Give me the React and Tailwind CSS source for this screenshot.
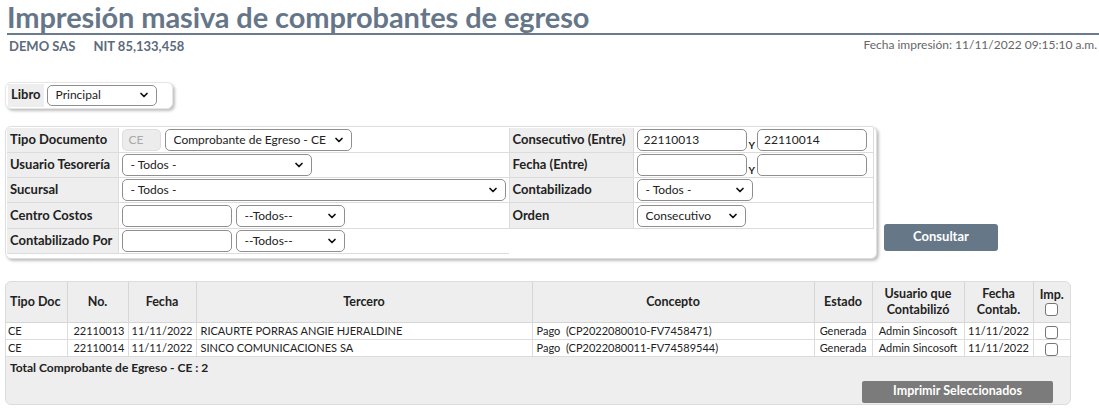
import { ChevronDown } from 'lucide-react';

// ── small form atoms ─────────────────────────────────────────────────────────
function Select({ value, className = '' }) {
  return (
    <div
      className={[
        'flex items-center justify-between h-[21px] pl-[8px] pr-[6px]',
        'border border-[#8f8f8f] rounded-[5px] bg-white text-[12px] text-[#222]',
        className,
      ].join(' ')}
    >
      <span className="truncate">{value}</span>
      <ChevronDown size={12} strokeWidth={3.5} className="shrink-0 text-[#111]" />
    </div>
  );
}

function Input({ value = '', className = '', disabled = false }) {
  return (
    <div
      className={[
        'flex items-center h-[22px] px-[6px] rounded-[5px] border text-[12px]',
        disabled
          ? 'bg-[#ececec] border-[#dedede] text-[#a9a9a9]'
          : 'bg-white border-[#8f8f8f] text-[#222]',
        className,
      ].join(' ')}
    >
      {value}
    </div>
  );
}

const Y = () => <span className="text-[10px] font-bold text-[#222] self-end mx-[2px] -mb-[2px]">Y</span>;

function Label({ children }) {
  return (
    <td className="bg-[#eeeeee] pl-[3px] pr-[4px] font-bold text-[13px] text-[#222] whitespace-nowrap border-b border-r border-[#dcdcdc]">
      {children}
    </td>
  );
}

function Field({ children }) {
  return (
    <td className="px-[3px] border-b border-r border-[#dcdcdc]">
      <div className="flex items-center gap-[4px]">{children}</div>
    </td>
  );
}

// ── result rows ──────────────────────────────────────────────────────────────
const ROWS = [
  ['CE', '22110013', '11/11/2022', 'RICAURTE PORRAS ANGIE HJERALDINE', 'Pago  (CP2022080010-FV7458471)'],
  ['CE', '22110014', '11/11/2022', 'SINCO COMUNICACIONES SA', 'Pago  (CP2022080011-FV74589544)'],
];

const Check = () => (
  <span className="inline-block w-[13px] h-[13px] border border-[#767676] rounded-[3px] bg-white align-middle" />
);

export default function App() {
  return (
    <div className="w-[1099px] h-[409px] bg-white font-['Lato','Liberation_Sans',sans-serif] text-[#222] overflow-hidden">
      {/* ── Header ─────────────────────────────────────────────────────── */}
      <div className="pl-[7px]">
        <h1 className="text-[29px] leading-[33px] font-bold text-[#667689] tracking-[-0.1px]">
          Impresión masiva de comprobantes de egreso
        </h1>
        <div className="h-[2px] bg-[#6b7b8c]" />
        <div className="flex justify-between items-start pr-[2px]">
          <p className="pl-[2px] pt-[2px] text-[13px] font-bold text-[#5c6b7b]">
            DEMO SAS<span className="inline-block w-[18px]" />NIT 85,133,458
          </p>
          <p className="pt-[1px] text-[12px] text-[#666]">Fecha impresión: 11/11/2022 09:15:10 a.m.</p>
        </div>
      </div>

      {/* ── Libro ──────────────────────────────────────────────────────── */}
      <div className="ml-[5px] mt-[25px] w-[168px] h-[27px] flex items-center gap-[3px] pl-[2px] rounded-[6px] bg-white border border-[#e6e6e6] shadow-[2px_2px_3px_rgba(0,0,0,0.25)]">
        <span className="bg-[#eeeeee] h-[23px] flex items-center px-[3px] font-bold text-[13px]">Libro</span>
        <Select value="Principal" className="w-[110px]" />
      </div>

      {/* ── Filters + Consultar ────────────────────────────────────────── */}
      <div className="flex items-end gap-[7px] mt-[17px] ml-[5px]">
        <div className="w-[872px] h-[133px] bg-white border border-[#dedede] rounded-[6px] shadow-[2px_2px_3px_rgba(0,0,0,0.25)] pl-[1px] pt-[1px]">
          <table className="border-collapse w-[866px] table-fixed">
            <colgroup>
              <col className="w-[111px]" />
              <col className="w-[391px]" />
              <col className="w-[124px]" />
              <col className="w-[240px]" />
            </colgroup>
            <tbody>
              <tr className="h-[25px]">
                <Label>Tipo Documento</Label>
                <Field>
                  <Input value="CE" disabled className="w-[39px]" />
                  <Select value="Comprobante de Egreso - CE" className="w-[187px] h-[22px]" />
                </Field>
                <Label>Consecutivo (Entre)</Label>
                <Field>
                  <div className="flex">
                    <Input value="22110013" className="w-[110px]" />
                    <Y />
                    <Input value="22110014" className="w-[110px]" />
                  </div>
                </Field>
              </tr>
              <tr className="h-[25px]">
                <Label>Usuario Tesorería</Label>
                <Field>
                  <Select value="- Todos -" className="w-[190px] h-[22px]" />
                </Field>
                <Label>Fecha (Entre)</Label>
                <Field>
                  <div className="flex">
                    <Input className="w-[110px]" />
                    <Y />
                    <Input className="w-[110px]" />
                  </div>
                </Field>
              </tr>
              <tr className="h-[25px]">
                <Label>Sucursal</Label>
                <Field>
                  <Select value="- Todos -" className="w-[384px] h-[22px]" />
                </Field>
                <Label>Contabilizado</Label>
                <Field>
                  <Select value="- Todos -" className="w-[116px] h-[22px]" />
                </Field>
              </tr>
              <tr className="h-[26px]">
                <Label>Centro Costos</Label>
                <Field>
                  <Input className="w-[110px]" />
                  <Select value="--Todos--" className="w-[109px] h-[22px]" />
                </Field>
                <Label>Orden</Label>
                <Field>
                  <Select value="Consecutivo" className="w-[109px] h-[22px]" />
                </Field>
              </tr>
              <tr className="h-[25px]">
                <Label>Contabilizado Por</Label>
                <td className="px-[3px] border-b border-[#dcdcdc]">
                  <div className="flex items-center gap-[4px]">
                    <Input className="w-[110px]" />
                    <Select value="--Todos--" className="w-[109px] h-[22px]" />
                  </div>
                </td>
                <td colSpan={2} />
              </tr>
            </tbody>
          </table>
        </div>
        <button className="mb-[8px] w-[114px] h-[27px] rounded-[3px] bg-[#667788] text-white font-bold text-[13px]">
          Consultar
        </button>
      </div>

      {/* ── Results ────────────────────────────────────────────────────── */}
      <div className="ml-[5px] mt-[22px] w-[1066px] h-[124px] flex flex-col bg-[#eeeeee] border border-[#dcdcdc] rounded-[6px] overflow-hidden">
        <table className="border-collapse table-fixed w-[1064px] text-[11px]">
          <colgroup>
            <col className="w-[61px]" />
            <col className="w-[61px]" />
            <col className="w-[68px]" />
            <col className="w-[336px]" />
            <col className="w-[282px]" />
            <col className="w-[58px]" />
            <col className="w-[92px]" />
            <col className="w-[69px]" />
            <col className="w-[37px]" />
          </colgroup>
          <thead>
            <tr className="h-[41px] text-[12.5px] font-bold leading-[16px]">
              <th className="text-left pl-[4px] border-r border-b border-[#d6d6d6]">Tipo Doc</th>
              <th className="border-r border-b border-[#d6d6d6]">No.</th>
              <th className="border-r border-b border-[#d6d6d6]">Fecha</th>
              <th className="border-r border-b border-[#d6d6d6]">Tercero</th>
              <th className="border-r border-b border-[#d6d6d6]">Concepto</th>
              <th className="border-r border-b border-[#d6d6d6]">Estado</th>
              <th className="border-r border-b border-[#d6d6d6]">Usuario que<br />Contabilizó</th>
              <th className="border-r border-b border-[#d6d6d6]">Fecha<br />Contab.</th>
              <th className="border-b border-[#d6d6d6]">
                Imp.
                <div className="leading-[12px]"><Check /></div>
              </th>
            </tr>
          </thead>
          <tbody>
            {ROWS.map(([tipo, no, fecha, tercero, concepto]) => (
              <tr key={no} className="h-[17px] bg-white leading-[16px]">
                <td className="pl-[2px] border-r border-b border-[#dcdcdc]">{tipo}</td>
                <td className="text-right pr-[3px] border-r border-b border-[#dcdcdc]">{no}</td>
                <td className="text-right pr-[3px] border-r border-b border-[#dcdcdc]">{fecha}</td>
                <td className="pl-[4px] border-r border-b border-[#dcdcdc] whitespace-nowrap">{tercero}</td>
                <td className="pl-[4px] border-r border-b border-[#dcdcdc] whitespace-pre">{concepto}</td>
                <td className="text-center border-r border-b border-[#dcdcdc]">Generada</td>
                <td className="text-center border-r border-b border-[#dcdcdc] whitespace-nowrap">Admin Sincosoft</td>
                <td className="text-center border-r border-b border-[#dcdcdc]">11/11/2022</td>
                <td className="text-center border-b border-[#dcdcdc]"><Check /></td>
              </tr>
            ))}
          </tbody>
        </table>
        <p className="pl-[4px] pt-[2px] text-[12px] font-bold">Total Comprobante de Egreso - CE : 2</p>
        <div className="flex justify-end pr-[17px] mt-auto mb-[1px]">
          <button className="w-[191px] h-[22px] bg-[#7b7b7b] rounded-[2px] text-white font-bold text-[12.5px]">
            Imprimir Seleccionados
          </button>
        </div>
      </div>
    </div>
  );
}
